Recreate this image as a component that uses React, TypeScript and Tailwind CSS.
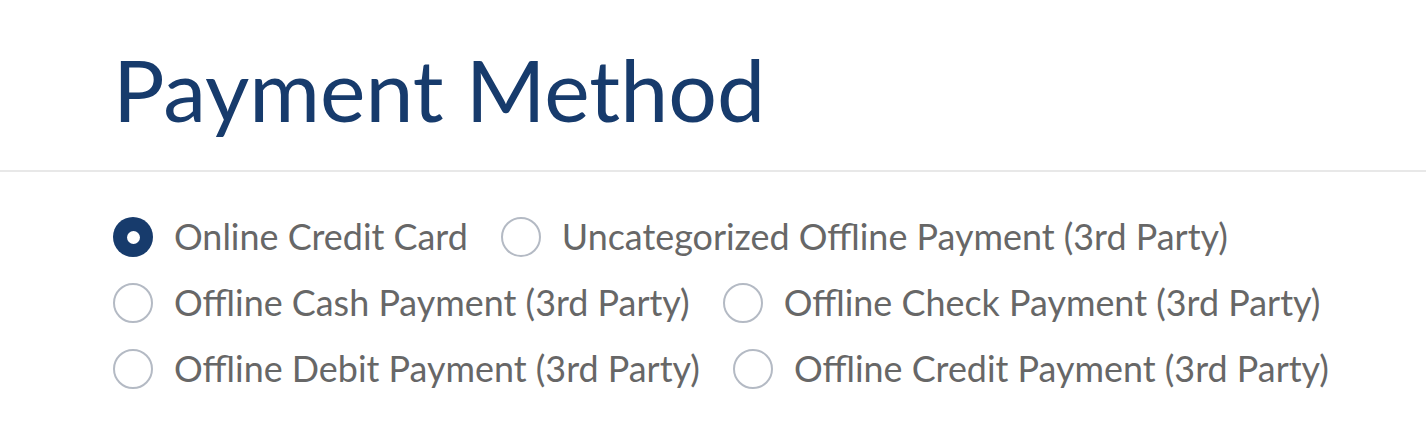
import React from "react";

const rows: { label: string; checked?: boolean }[][] = [
  [{ label: "Online Credit Card", checked: true }, { label: "Uncategorized Offline Payment (3rd Party)" }],
  [{ label: "Offline Cash Payment (3rd Party)" }, { label: "Offline Check Payment (3rd Party)" }],
  [{ label: "Offline Debit Payment (3rd Party)" }, { label: "Offline Credit Payment (3rd Party)" }],
];

function Radio({ checked }: { checked?: boolean }) {
  return checked ? (
    <span className="flex h-[40px] w-[40px] shrink-0 items-center justify-center rounded-full bg-[#173b6c]">
      <span className="h-[13px] w-[13px] rounded-full bg-white" />
    </span>
  ) : (
    <span className="h-[40px] w-[40px] shrink-0 rounded-full border-2 border-[#b4bac4] bg-white" />
  );
}

export default function App() {
  return (
    <div className="h-[435px] w-[1426px] bg-white" style={{ fontFamily: "Lato, 'Open Sans', sans-serif" }}>
      <div className="px-[113px] pt-[39px] pb-[31px]">
        <h1 className="text-[86px] leading-[100px] font-normal text-[#173b6c]">Payment Method</h1>
      </div>
      <div className="h-[2px] w-full bg-[#e8e8e8]" />
      <div className="flex flex-col gap-[26px] px-[113px] pt-[45px]">
        {rows.map((row, i) => (
          <div key={i} className="flex items-center gap-[33px]">
            {row.map((o) => (
              <label key={o.label} className="flex shrink-0 items-center gap-[21px]">
                <Radio checked={o.checked} />
                <span className="whitespace-nowrap text-[35.9px] leading-[40px] text-[#676767]">{o.label}</span>
              </label>
            ))}
          </div>
        ))}
      </div>
    </div>
  );
}
